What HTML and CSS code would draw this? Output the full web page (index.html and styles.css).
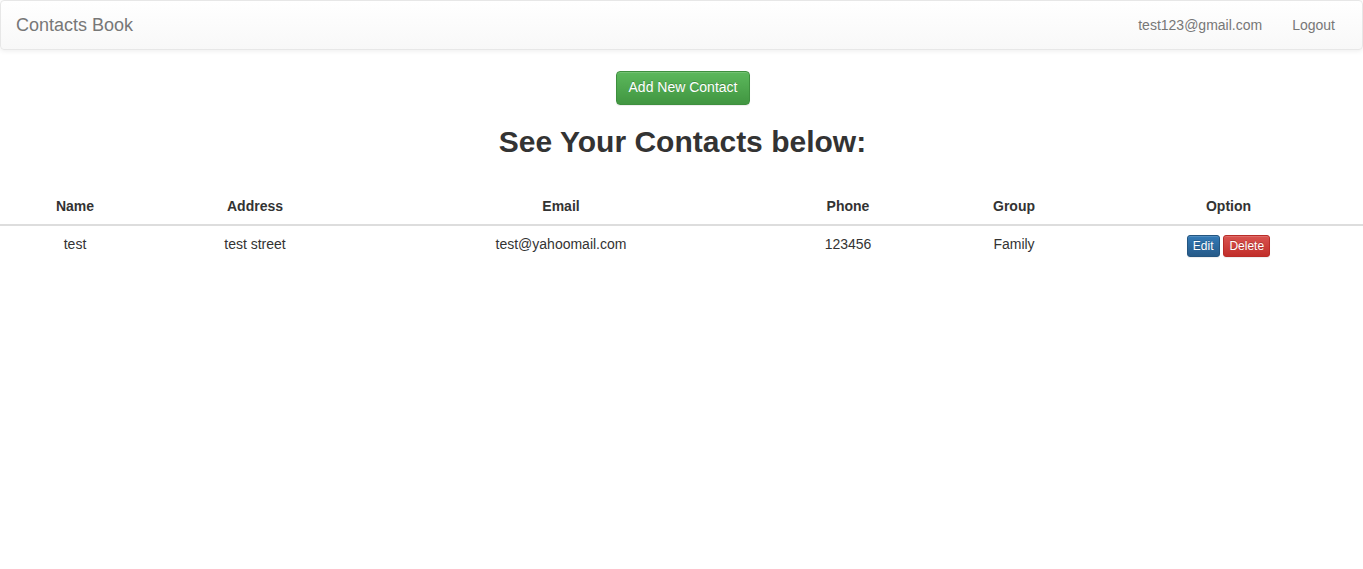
FILE: index.html
```html
<!DOCTYPE html>
<html>
<head>
<meta charset="utf-8">
<title>Contacts Book</title>
<link rel="stylesheet" href="styles.css">
</head>
<body>
<nav class="navbar">
  <a class="brand" href="#">Contacts Book</a>
  <ul class="nav-right">
    <li><a href="#">test123@gmail.com</a></li>
    <li><a href="#">Logout</a></li>
  </ul>
</nav>
<main class="content">
  <div class="actions"><button class="btn btn-success">Add New Contact</button></div>
  <h2 class="title">See Your Contacts below:</h2>
  <table class="table">
    <colgroup>
      <col class="c-name"><col class="c-address"><col class="c-email"><col class="c-phone"><col class="c-group"><col class="c-option">
    </colgroup>
    <thead>
      <tr><th>Name</th><th>Address</th><th>Email</th><th>Phone</th><th>Group</th><th>Option</th></tr>
    </thead>
    <tbody>
      <tr>
        <td>test</td><td>test street</td><td>test@yahoomail.com</td><td>123456</td><td>Family</td>
        <td><button class="btn btn-xs btn-primary">Edit</button> <button class="btn btn-xs btn-danger">Delete</button></td>
      </tr>
    </tbody>
  </table>
</main>
</body>
</html>
```
FILE: styles.css
```css
* { box-sizing: border-box; }
html, body { margin: 0; padding: 0; }
body {
  font-family: "Liberation Sans", Arial, Helvetica, sans-serif;
  font-size: 14px;
  line-height: 1.42857;
  color: #333;
  background: #fff;
}
.navbar {
  display: flex;
  align-items: center;
  justify-content: space-between;
  height: 50px;
  margin-bottom: 21px;
  padding: 0 12px 0 0;
  background: linear-gradient(to bottom, #fff 0%, #f8f8f8 100%);
  border: 1px solid #e7e7e7;
  border-radius: 4px;
  box-shadow: inset 0 1px 0 rgba(255,255,255,.15), 0 1px 5px rgba(0,0,0,.075);
}
.brand {
  font-size: 18px;
  line-height: 20px;
  padding: 15px;
  color: #777;
  text-decoration: none;
}
.nav-right {
  display: flex;
  list-style: none;
  margin: 0;
  padding: 0;
}
.nav-right a {
  display: block;
  padding: 15px;
  line-height: 20px;
  color: #777;
  text-decoration: none;
}
.actions { text-align: center; padding-left: 3px; }
.btn {
  display: inline-block;
  font-family: inherit;
  font-size: 14px;
  line-height: 1.42857;
  padding: 6px 12px;
  border-radius: 4px;
  border: 1px solid transparent;
  color: #fff;
  cursor: pointer;
  text-shadow: 0 -1px 0 rgba(0,0,0,.2);
  box-shadow: inset 0 1px 0 rgba(255,255,255,.15), 0 1px 1px rgba(0,0,0,.075);
}
.btn-success {
  background: linear-gradient(to bottom, #5cb85c 0%, #419641 100%);
  border-color: #3e8f3e;
}
.btn-xs {
  font-size: 12px;
  line-height: 1.5;
  padding: 1px 5px;
  border-radius: 3px;
}
.btn-primary {
  background: linear-gradient(to bottom, #337ab7 0%, #265a88 100%);
  border-color: #245580;
}
.btn-danger {
  background: linear-gradient(to bottom, #d9534f 0%, #c12e2a 100%);
  border-color: #b92c28;
}
.title {
  font-size: 30px;
  font-weight: bold;
  line-height: 1.1;
  text-align: center;
  margin: 20px 0 30px;
  padding-left: 2px;
  color: #333;
}
.table {
  width: 100%;
  border-collapse: collapse;
  border-spacing: 0;
}
.table th, .table td {
  padding: 9px 8px 7px;
  text-align: center;
  vertical-align: top;
  line-height: 1.42857;
}
.table thead th {
  border-bottom: 2px solid #ddd;
  font-weight: bold;
}
.table td .btn { vertical-align: middle; }
.c-name { width: 150px; }
.c-address { width: 210px; }
.c-email { width: 402px; }
.c-phone { width: 172px; }
.c-group { width: 160px; }
.c-option { width: 269px; }
```
